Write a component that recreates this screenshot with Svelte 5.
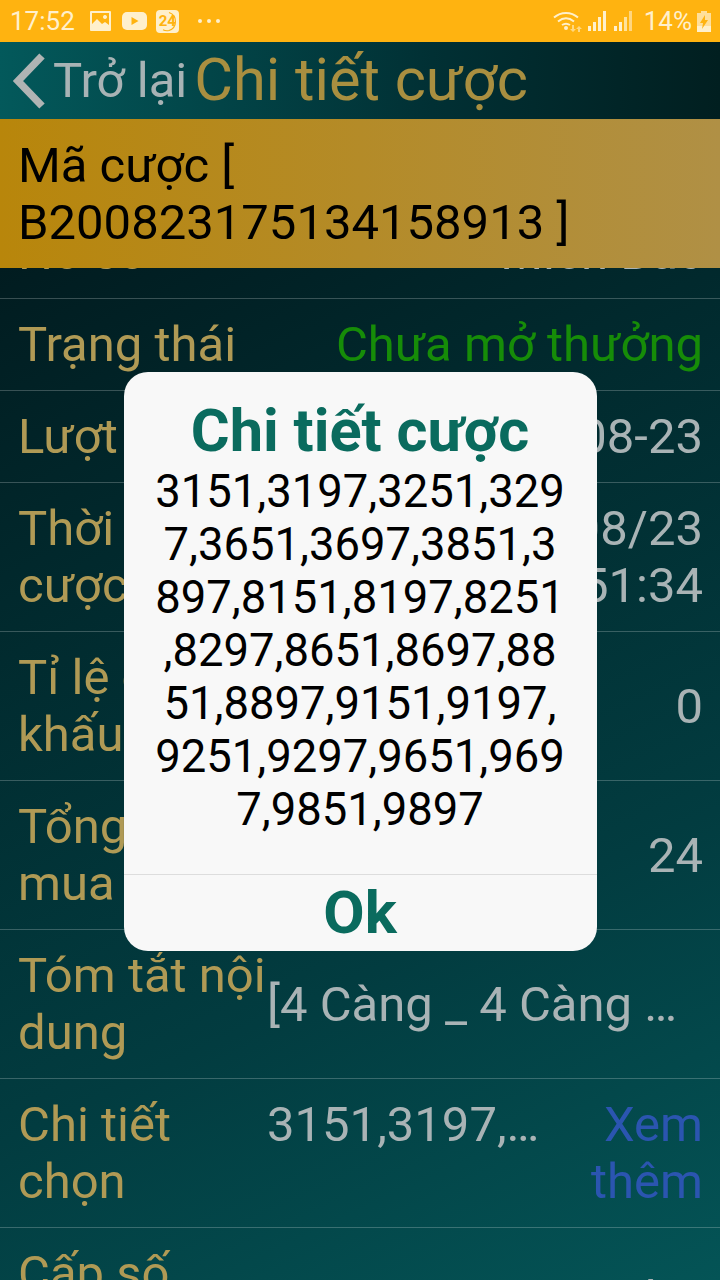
<script lang="ts">
    type Row = {
        label: string;
        value: string;
        kind?: string;
        link?: string;
    };

    const rows: Row[] = [
        { label: 'Hồ sơ', value: 'Miền Bắc' },
        { label: 'Trạng thái', value: 'Chưa mở thưởng', kind: 'green' },
        { label: 'Lượt xổ', value: '2020-08-23' },
        { label: 'Thời gian cược', value: '2020/08/23 17:51:34', kind: 'narrow' },
        { label: 'Tỉ lệ chiết khấu', value: '0' },
        { label: 'Tổng số mua', value: '24' },
        { label: 'Tóm tắt nội dung', value: '[4 Càng _ 4 Càng …', kind: 'left' },
        { label: 'Chi tiết chọn', value: '3151,3197,…', kind: 'left top', link: 'Xem thêm' },
        { label: 'Cấp số nhân', value: '1 lần' }
    ];

    const numbers = '3151,3197,3251,3297,3651,3697,3851,3897,8151,8197,8251,8297,8651,8697,8851,8897,9151,9197,9251,9297,9651,9697,9851,9897';
</script>

<div class="screen">
    <div class="status">
        <span class="time">17:52</span>
        <svg class="ic-img" width="21" height="20" viewBox="0 0 21 20">
            <path fill-rule="evenodd" fill="#fff0cc" d="M1 0h19a1 1 0 0 1 1 1v18a1 1 0 0 1-1 1H1a1 1 0 0 1-1-1V1a1 1 0 0 1 1-1zM2 2v11l5-5 5 5 3-2 4 3V2zM15 4a2 2 0 1 1-.01 0z" />
        </svg>
        <svg class="ic-play" width="25" height="18" viewBox="0 0 25 18">
            <rect width="25" height="18" rx="5" fill="#fff0cc" />
            <path d="M9.5 5l7 4-7 4z" fill="#ffb310" />
        </svg>
        <div class="ic-24">
            <span>24</span>
            <svg width="23" height="23" viewBox="0 0 23 23">
                <path d="M13 2.5a9.5 9.5 0 0 1 0 18c-2 .5-4 .3-6-.7" fill="none" stroke="#ffb310" stroke-width="1.2" />
            </svg>
        </div>
        <svg class="ic-dots" width="22" height="4" viewBox="0 0 22 4">
            <circle cx="2" cy="2" r="2" fill="#fff0cc" />
            <circle cx="11" cy="2" r="2" fill="#fff0cc" />
            <circle cx="20" cy="2" r="2" fill="#fff0cc" />
        </svg>
        <span class="spacer"></span>
        <svg class="ic-wifi" width="30" height="21" viewBox="0 0 30 21">
            <g fill="none" stroke="#fff0cc" stroke-width="2">
                <path d="M1 6.5C8 .5 18 .5 25 6.5" />
                <path d="M5 10.5c5-4 11-4 16 0" />
                <path d="M9 14c3-2 5-2 8 0" />
            </g>
            <circle cx="13" cy="17" r="2" fill="#fff0cc" />
            <path d="M19 14h2v4h2l-3 3-3-3h2zM26 15l3 3h-2v3h-2v-3h-2z" fill="#ffd880" />
        </svg>
        <svg class="ic-sig" width="19" height="20" viewBox="0 0 19 20">
            <rect x="0" y="15" width="3" height="5" fill="#fff0cc" />
            <rect x="5" y="11" width="3" height="9" fill="#fff0cc" />
            <rect x="10" y="6" width="3" height="14" fill="#fff0cc" />
            <rect x="15" y="0" width="3" height="20" fill="#fff0cc" />
        </svg>
        <svg class="ic-sig second" width="19" height="20" viewBox="0 0 19 20">
            <rect x="0" y="15" width="3" height="5" fill="#fff0cc" />
            <rect x="5" y="11" width="3" height="9" fill="#fff0cc" />
            <rect x="10" y="6" width="3" height="14" fill="#ffe29a" />
            <rect x="15" y="0" width="3" height="20" fill="#ffd680" />
        </svg>
        <span class="percent">14%</span>
        <svg class="ic-batt" width="14" height="21" viewBox="0 0 14 21">
            <path d="M4 0h6v2h4v19H0V2h4z" fill="#ffdf9a" />
            <path d="M0 15h14v6H0z" fill="#fff0cc" />
            <path d="M8 4L3 12h3l-1 6 6-9H8z" fill="#ffb310" />
        </svg>
    </div>

    <div class="header">
        <svg class="back" width="34" height="56" viewBox="0 0 34 56">
            <path d="M30 3L6 28l24 25" fill="none" stroke="#b0b4b4" stroke-width="7.5" />
        </svg>
        <span class="back-text">Trở lại</span>
        <span class="title">Chi tiết cược</span>
    </div>

    <div class="code">Mã cược [ B200823175134158913 ]</div>

    <div class="list">
        {#each rows as row, i}
            <div class="row" class:scrolled={i === 0}>
                <div class="label">{row.label}</div>
                <div class="value {row.kind ?? ''}">{row.value}</div>
                {#if row.link}
                    <div class="link">{row.link}</div>
                {/if}
            </div>
        {/each}
    </div>

    <div class="overlay">
        <div class="dialog">
            <h2>Chi tiết cược</h2>
            <p>{numbers}</p>
            <button>Ok</button>
        </div>
    </div>
</div>

<style>
    :global(body) {
        margin: 0;
    }

    .screen {
        position: relative;
        display: flex;
        flex-direction: column;
        width: 720px;
        height: 1280px;
        overflow: hidden;
        font-family: Roboto, "Liberation Sans", sans-serif;
        font-size: 49px;
        line-height: 57px;
    }

    .status {
        display: flex;
        align-items: center;
        flex: none;
        height: 42px;
        padding: 0 9px 0 10px;
        box-sizing: border-box;
        background-color: #ffb310;
        color: #fff0cc;
        font-size: 26px;
        line-height: 42px;
    }

    .ic-img {
        margin-left: 15px;
    }

    .ic-play {
        margin-left: 11px;
    }

    .ic-24 {
        position: relative;
        width: 23px;
        height: 23px;
        margin-left: 9px;
        border-radius: 4px;
        background-color: #fff0cc;
        color: #ffb310;
        font-size: 15px;
        font-weight: 700;
        line-height: 23px;
        text-align: center;
    }

    .ic-24 svg {
        position: absolute;
        top: 0;
        left: 0;
    }

    .ic-dots {
        margin-left: 19px;
    }

    .spacer {
        flex: 1;
    }

    .ic-sig {
        margin-left: 5px;
    }

    .ic-sig.second {
        margin-left: 7px;
    }

    .percent {
        margin-left: 11px;
    }

    .ic-batt {
        margin-left: 5px;
    }

    .header {
        display: flex;
        align-items: center;
        flex: none;
        height: 77px;
        padding-left: 12px;
        box-sizing: border-box;
        background: linear-gradient(90deg, #03595b, #013034 60%, #011f20);
    }

    .back-text {
        margin-left: 7px;
        color: #a8b3b5;
    }

    .title {
        margin-left: 7px;
        color: #a98f40;
        font-size: 59.5px;
    }

    .code {
        position: relative;
        z-index: 1;
        flex: none;
        height: 149px;
        padding: 18px 100px 0 18px;
        box-sizing: border-box;
        background: linear-gradient(90deg, #b8860b, #b09045);
        color: #000;
    }

    .list {
        flex: 1;
        min-height: 0;
        background: linear-gradient(155deg, #011c20 0%, #01292d 25%, #023c40 65%, #045456 100%);
    }

    .row {
        display: flex;
        align-items: center;
        justify-content: space-between;
        padding: 17px 17px 17px 18px;
        border-bottom: 1px solid rgba(255, 255, 255, 0.22);
    }

    .row.scrolled {
        margin-top: -61px;
    }

    .label {
        flex: none;
        width: 248px;
        color: #b09a55;
    }

    .value {
        flex: 1;
        margin-left: 1px;
        color: #a9b3b5;
        text-align: right;
    }

    .value.green {
        color: #168c08;
    }

    .value.narrow {
        flex: none;
        width: 280px;
    }

    .value.left {
        text-align: left;
    }

    .value.top {
        align-self: flex-start;
    }

    .link {
        flex: none;
        width: 112px;
        color: #2b55b0;
        text-align: right;
    }

    .overlay {
        position: absolute;
        top: 42px;
        right: 0;
        bottom: 0;
        left: 0;
        z-index: 2;
        display: flex;
        align-items: center;
        justify-content: center;
    }

    .dialog {
        display: flex;
        flex-direction: column;
        align-items: center;
        width: 473px;
        height: 579px;
        border-radius: 24px;
        background-color: #f8f8f8;
    }

    .dialog h2 {
        margin: 27px 0 0;
        color: #0a6b5e;
        font-size: 59.5px;
        font-weight: 700;
        line-height: 64px;
    }

    .dialog p {
        flex: 1;
        width: 412px;
        margin: 2px 0 0;
        color: #000;
        font-size: 45.4px;
        line-height: 53px;
        line-break: anywhere;
        text-align: center;
    }

    .dialog button {
        width: 100%;
        height: 77px;
        padding: 0;
        border: none;
        border-top: 1px solid #ddd;
        background: none;
        color: #0a6b5e;
        font-family: inherit;
        font-size: 60px;
        font-weight: 700;
    }
</style>
